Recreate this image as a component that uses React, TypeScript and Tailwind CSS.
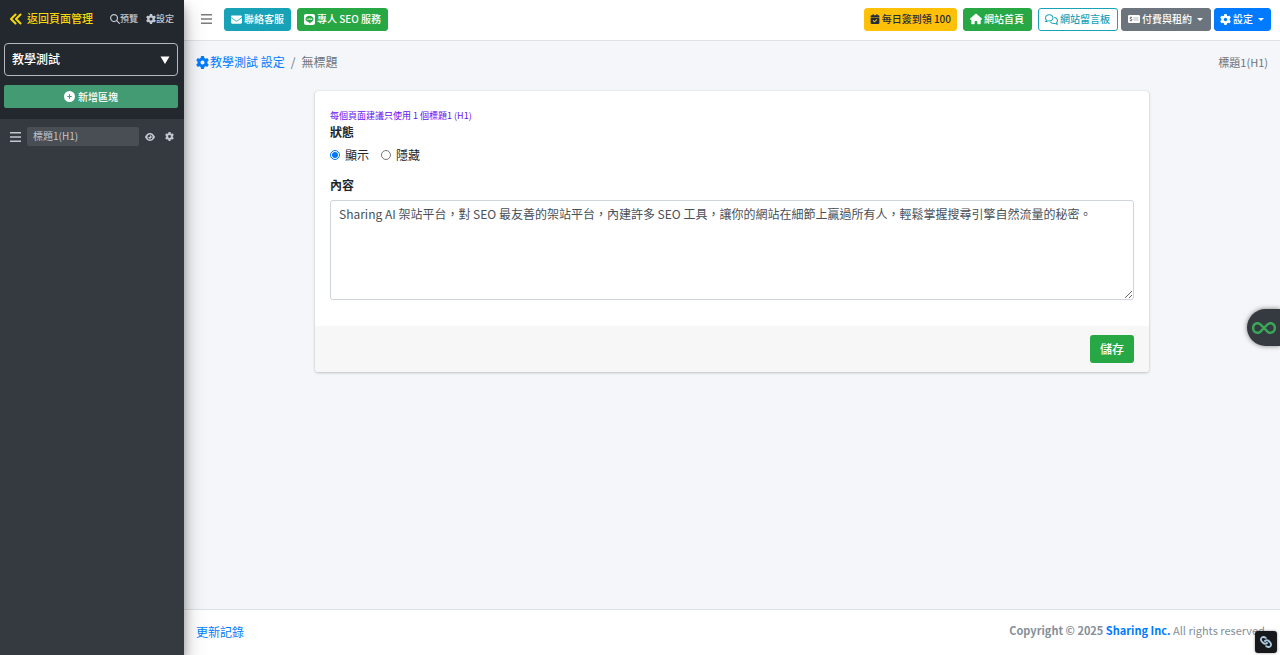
import type { ReactNode } from "react";
import { FaLink } from "react-icons/fa";
import {
  FaCalendarCheck,
  FaCirclePlus,
  FaEnvelope,
  FaEye,
  FaGear,
  FaHouse,
  FaInfinity,
  FaLine,
  FaMagnifyingGlass,
  FaMoneyCheckDollar,
  FaRegComments,
} from "react-icons/fa6";

type BarButtonProps = {
  icon: ReactNode;
  label: string;
  className: string;
  caret?: boolean;
};

function BarButton({ icon, label, className, caret }: BarButtonProps) {
  return (
    <button
      type="button"
      className={`flex h-[23px] items-center gap-0.5 whitespace-nowrap rounded-[3px] border text-[10px] font-medium ${className}`}
    >
      {icon}
      <span className="pb-px">{label}</span>
      {caret && (
        <svg viewBox="0 0 6 3" className="ml-[3px] h-[3px] w-1.5 fill-current">
          <path d="M0 0h6L3 3z" />
        </svg>
      )}
    </button>
  );
}

function Sidebar() {
  return (
    <aside className="relative z-10 w-[184px] shrink-0 bg-[#343a40] text-[#c2c7d0] shadow-[0_10px_20px_rgba(0,0,0,0.3),0_6px_8px_rgba(0,0,0,0.25)]">
      <div className="bg-[#23272e] pb-[11px] pl-1 pr-1.5">
        <div className="flex h-[39px] items-center pb-0.5 pl-1.5 pr-1 font-medium">
          <a href="#pages" className="flex items-center gap-[5px] text-[11px] text-[#f5d90a]">
            <svg
              viewBox="0 0 12 12"
              className="size-3 fill-none stroke-current stroke-2"
              strokeLinecap="round"
              strokeLinejoin="round"
            >
              <path d="M5.5 1.5L1 6l4.500 4.500M10.500 1.500L6 6l4.500 4.500" />
            </svg>
            返回頁面管理
          </a>
          <div className="ml-auto flex gap-2 text-[9px]">
            <a href="#preview" className="flex items-center">
              <FaMagnifyingGlass className="text-[10px]" />
              預覽
            </a>
            <a href="#settings" className="flex items-center">
              <FaGear className="text-[10px]" />
              設定
            </a>
          </div>
        </div>

        <div className="relative mt-1">
          <select
            aria-label="頁面"
            className="block h-[33px] w-full appearance-none rounded-[4px] border border-[#b5b8bd] bg-[#23272e] px-[7px] pb-0.5 text-[12px] font-medium text-white"
          >
            <option>教學測試</option>
          </select>
          <svg viewBox="0 0 10 8" className="pointer-events-none absolute right-2 top-[13px] h-2 w-2.5 fill-white">
            <path d="M0.5 0.5h9L5 8z" />
          </svg>
        </div>

        <button
          type="button"
          className="mt-[9px] flex h-[23px] w-full items-center justify-center gap-[3px] rounded-[2px] bg-[#429b73] text-[10px] font-medium text-white"
        >
          <FaCirclePlus className="text-[11px]" />
          新增區塊
        </button>
      </div>

      <div className="flex items-center px-2.5 pt-2">
        <svg viewBox="0 0 11 10" className="h-2.5 w-[11px] fill-current">
          <path d="M0 0h11v1.4H0zM0 4.3h11v1.4H0zM0 8.6h11v1.4H0z" />
        </svg>
        <input
          aria-label="區塊名稱"
          defaultValue="標題1(H1)"
          className="ml-1.5 h-[19px] w-28 min-w-0 rounded-[2px] bg-[#494e54] px-1.5 pb-0.5 text-[10px]"
        />
        <button type="button" aria-label="顯示區塊" className="ml-1.5">
          <FaEye className="text-[10px]" />
        </button>
        <button type="button" aria-label="區塊設定" className="ml-auto">
          <FaGear className="text-[9px]" />
        </button>
      </div>
    </aside>
  );
}

function Topbar() {
  return (
    <header className="flex h-[41px] items-center border-b border-[#dee2e6] bg-white pb-0.5 pl-[17px] pr-[9px]">
      <button type="button" aria-label="選單" className="mr-3 text-[#7b7b7b]">
        <svg viewBox="0 0 11 10" className="h-2.5 w-[11px] fill-current">
          <path d="M0 0h11v1.4H0zM0 4.3h11v1.4H0zM0 8.6h11v1.4H0z" />
        </svg>
      </button>
      <div className="flex gap-1.5">
        <BarButton
          icon={<FaEnvelope className="text-[11px]" />}
          label="聯絡客服"
          className="border-[#17a2b8] bg-[#17a2b8] px-1.5 text-white"
        />
        <BarButton
          icon={<FaLine className="text-[11px]" />}
          label="專人 SEO 服務"
          className="border-[#28a745] bg-[#28a745] px-1.5 text-white"
        />
      </div>
      <div className="ml-auto flex gap-[3px]">
        <div className="mr-[3px] flex gap-1.5">
          <BarButton
            icon={<FaCalendarCheck className="text-[10px]" />}
            label="每日簽到領 100"
            className="border-[#ffc107] bg-[#ffc107] px-[5px] text-[#1f2d3d]"
          />
          <BarButton
            icon={<FaHouse className="text-[12px]" />}
            label="網站首頁"
            className="border-[#28a745] bg-[#28a745] pl-1.5 pr-[7px] text-white"
          />
        </div>
        <BarButton
          icon={<FaRegComments className="text-[13px]" />}
          label="網站留言板"
          className="border-[#17a2b8] bg-white pl-1.5 pr-[7px] text-[#17a2b8]"
        />
        <BarButton
          icon={<FaMoneyCheckDollar className="text-[12px]" />}
          label="付費與租約"
          caret
          className="border-[#6c757d] bg-[#6c757d] pl-1.5 pr-[7px] text-white"
        />
        <BarButton
          icon={<FaGear className="text-[11px]" />}
          label="設定"
          caret
          className="border-[#007bff] bg-[#007bff] pl-[5px] pr-1.5 text-white"
        />
      </div>
    </header>
  );
}

function BlockForm() {
  return (
    <form className="mx-auto w-full max-w-[834px] overflow-hidden rounded-[3px] bg-white shadow-[0_0_1px_rgba(0,0,0,0.2),0_1px_3px_rgba(0,0,0,0.2)]">
      <div className="px-[15px] pb-[26px] pt-[17px] text-[#212529]">
        <p className="text-[9px] leading-[15px] text-[#6610f2]">每個頁面建議只使用 1 個標題1 (H1)</p>
        <fieldset>
          <legend className="text-[12px] font-bold leading-[18px]">狀態</legend>
          <div className="flex gap-3 pt-[5px] text-[12px] leading-[18px]">
            <label className="flex items-center gap-[5px]">
              <input type="radio" name="status" defaultChecked className="size-2.5" />
              顯示
            </label>
            <label className="flex items-center gap-[5px]">
              <input type="radio" name="status" className="size-2.5" />
              隱藏
            </label>
          </div>
        </fieldset>
        <label htmlFor="content" className="mt-3 block text-[12px] font-bold leading-[18px]">
          內容
        </label>
        <textarea
          id="content"
          className="mt-1.5 block h-[100px] w-full rounded-[3px] border border-[#ced4da] px-2 py-1 text-[12px] leading-[18px] text-[#495057]"
          defaultValue="Sharing AI 架站平台，對 SEO 最友善的架站平台，內建許多 SEO 工具，讓你的網站在細節上贏過所有人，輕鬆掌握搜尋引擎自然流量的秘密。"
        />
      </div>
      <div className="flex justify-end bg-[#f7f7f7] px-[15px] py-[9px]">
        <button
          type="submit"
          className="h-7 rounded-[3px] bg-[#28a745] px-2.5 text-[12px] font-medium text-white"
        >
          儲存
        </button>
      </div>
    </form>
  );
}

export default function App() {
  return (
    <div
      lang="zh-Hant"
      className="flex min-h-screen bg-[#f4f6f9] font-['Noto_Sans_CJK_TC',sans-serif]"
    >
      <Sidebar />

      <div className="flex min-w-0 flex-1 flex-col">
        <Topbar />

        <main className="flex-1">
          <div className="flex items-center px-3 pb-5 pt-3 text-[12px] leading-[18px] text-[#6c757d]">
            <nav aria-label="breadcrumb" className="flex items-center">
              <a href="#site" className="flex items-center gap-px text-[#007bff]">
                <FaGear className="text-[13px]" />
                教學測試 設定
              </a>
              <span className="px-1.5">/</span>
              <span>無標題</span>
            </nav>
            <span className="ml-auto text-[11px]">標題1(H1)</span>
          </div>
          <BlockForm />
        </main>

        <footer className="flex h-[46px] items-center border-t border-[#dee2e6] bg-white pb-0.5 pl-3 pr-3 text-[#869099]">
          <a href="#changelog" className="text-[12px] text-[#007bff]">
            更新記錄
          </a>
          <p className="mb-0.5 ml-auto text-[11px]">
            <strong>
              Copyright © 2025{" "}
              <a href="#sharing" className="text-[#007bff]">
                Sharing Inc.
              </a>
            </strong>{" "}
            All rights reserved.
          </p>
        </footer>
      </div>

      <button
        type="button"
        aria-label="快速工具"
        className="fixed right-0 top-[309px] z-20 flex h-[37px] w-[33px] items-center justify-center rounded-l-full bg-[#343a40] text-[#3aa757] shadow-[0_0_5px_rgba(0,0,0,0.5)]"
      >
        <FaInfinity className="text-[24px]" />
      </button>
      <button
        type="button"
        aria-label="連結"
        className="fixed bottom-0.5 right-[3px] z-20 flex size-[22px] items-center justify-center rounded-[3px] bg-[#16181b] text-[#a9c7dd] shadow-[0_0_3px_rgba(0,0,0,0.4)]"
      >
        <FaLink className="rotate-90 text-[12px]" />
      </button>
    </div>
  );
}
